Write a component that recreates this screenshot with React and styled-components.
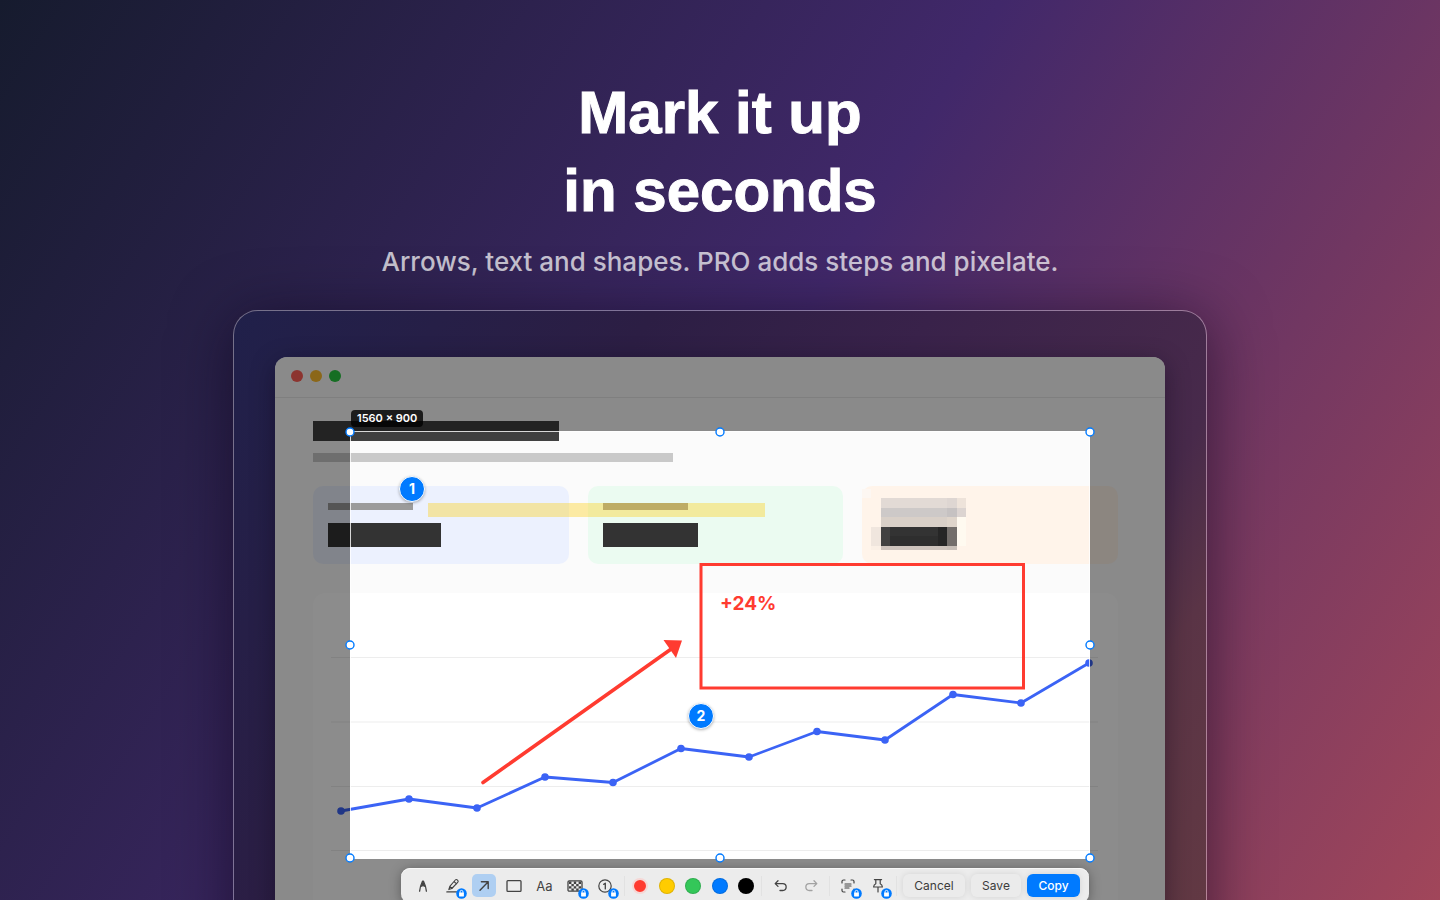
import React from 'react'
import styled, { createGlobalStyle, css } from 'styled-components'

const GlobalStyle = createGlobalStyle`
    * {
        box-sizing: border-box;
    }
    body {
        margin: 0;
        background: #41286a;
        font-family: Inter, 'Liberation Sans', sans-serif;
    }
`

const Page = styled.main`
    height: 100vh;
    overflow: hidden;
    display: flex;
    flex-direction: column;
    align-items: center;
    background: linear-gradient(122deg, #161b2e, #41286a 50%, #a1465a);
`
const Hero = styled.header`
    padding-top: 74px;
    text-align: center;
    color: #fff;
`
const Title = styled.h1`
    margin: 0;
    font-family: 'Liberation Sans', Inter, sans-serif;
    font-size: 60px;
    font-weight: 700;
    line-height: 78px;
    -webkit-text-stroke: 1px #fff;
`
const Subtitle = styled.p`
    margin: 15px 0 0;
    font-size: 26px;
    font-weight: 500;
    line-height: 34px;
    color: rgba(255, 255, 255, 0.72);
`

const Device = styled.section`
    position: relative;
    flex: none;
    width: min(974px, 100% - 48px);
    margin-top: 31px;
    padding: 46px 41px 0;
    border: 1px solid rgba(255, 255, 255, 0.36);
    border-radius: 25px;
    background: linear-gradient(122deg, #20204a, #2c1e44 30%, #39224a 50%, #482a4b 74%, #5a3446 82%, #643a42);
    background-clip: padding-box;
    box-shadow: 0 8px 60px rgba(10, 4, 20, 0.55);
`
const Window = styled.div`
    position: relative;
    height: 640px;
    border-radius: 12px;
    background: #fbfbfb;
    box-shadow: 0 6px 24px rgba(10, 0, 20, 0.4);
`
const TitleBar = styled.div`
    display: flex;
    gap: 7px;
    height: 41px;
    padding: 13px 16px;
    border-bottom: 1px solid #e8e8e8;
`
const Light = styled.span`
    width: 12px;
    height: 12px;
    border-radius: 50%;
    background: ${({ $color }) => $color};
`
const Content = styled.div`
    padding: 23px 47px 0 38px;
`
const Bar = styled.div`
    width: ${({ $width }) => $width}px;
    height: ${({ $height }) => $height}px;
    background: ${({ $tone }) => $tone};
`
const Heading = styled.div`
    display: flex;
    flex-direction: column;
    gap: 12px;
`
const Cards = styled.div`
    display: grid;
    grid-template-columns: repeat(3, 1fr);
    gap: 19px;
    margin-top: 24px;
`
const Card = styled.div`
    display: flex;
    flex-direction: column;
    gap: 13px;
    height: 78px;
    padding: ${({ $flush }) => ($flush ? 0 : '17px 15px')};
    border-radius: 10px;
    background: ${({ $tint }) => $tint};
`
const ChartPanel = styled.div`
    height: 340px;
    margin-top: 29px;
    border-radius: 12px;
    background: #fff;

    svg {
        display: block;
        width: 100%;
    }
`

const Dim = styled.div`
    position: absolute;
    inset: 0;
    overflow: hidden;
    border-radius: 12px;
`
const Hole = styled.div`
    position: absolute;
    inset: 74px 75px auto 75px;
    height: 428px;
    outline: 1px solid rgba(255, 255, 255, 0.8);
    outline-offset: -1px;
    box-shadow: 0 0 0 2000px rgba(0, 0, 0, 0.45);
`
const Selection = styled.div`
    position: absolute;
    inset: 75px 75px auto 75px;
    height: 427px;
`
const SizeTag = styled.span`
    position: absolute;
    left: 1px;
    top: -22px;
    padding: 0 6px;
    border-radius: 4px;
    background: rgba(0, 0, 0, 0.8);
    color: #fff;
    font-size: 11px;
    font-weight: 600;
    line-height: 17px;
    white-space: nowrap;
`
const Annotations = styled.svg`
    position: absolute;
    left: 0;
    top: 0;
    overflow: visible;
`
const Note = styled.span`
    position: absolute;
    left: 370px;
    top: 160px;
    color: #ff3b30;
    font-size: 19px;
    font-weight: 700;
    line-height: 24px;
`
const Step = styled.span`
    position: absolute;
    left: ${({ $x }) => $x}px;
    top: ${({ $y }) => $y}px;
    width: 26px;
    height: 26px;
    border: 1px solid #fff;
    border-radius: 50%;
    background: #007aff;
    box-shadow: 0 1px 3px rgba(0, 0, 0, 0.3);
    color: #fff;
    font-size: 14px;
    font-weight: 700;
    line-height: 24px;
    text-align: center;
`

const Toolbar = styled.div`
    position: absolute;
    right: 1px;
    top: 436px;
    display: flex;
    align-items: center;
    height: 35px;
    padding: 0 9px 0 10px;
    border-radius: 9px;
    background: #ececec;
    box-shadow: 0 2px 12px rgba(0, 0, 0, 0.35), inset 0 1px 0 #f8f8f8;
`
const Group = styled.div`
    display: flex;
    justify-content: space-between;
    width: ${({ $width }) => $width}px;
`
const Separator = styled.span`
    width: 1px;
    height: 20px;
    margin: ${({ $margin }) => $margin};
    background: #e2e2e2;
`
const buttonReset = css`
    border: 0;
    padding: 0;
    font-family: inherit;
`
const Tool = styled.button`
    ${buttonReset}
    position: relative;
    display: grid;
    place-items: center;
    width: 24px;
    height: 23px;
    border-radius: 5px;
    background: ${({ $active }) => ($active ? '#afcff2' : 'transparent')};
    color: ${({ $faded }) => ($faded ? '#a2a2a2' : '#434343')};
    font-size: 13px;
    font-weight: 400;
`
const Lock = styled.svg`
    position: absolute;
    right: -2px;
    bottom: -2px;
`
const Swatch = styled.button`
    ${buttonReset}
    width: 16px;
    height: 16px;
    border: ${({ $active }) => ($active ? '2px solid #f6d7d5' : '1px solid rgba(0, 0, 0, 0.12)')};
    border-radius: 50%;
    background: ${({ $color }) => $color};
`
const Action = styled.button`
    ${buttonReset}
    height: 23px;
    width: ${({ $width }) => $width}px;
    margin-left: 6px;
    border-radius: 6px;
    background: ${({ $primary }) => ($primary ? '#007aff' : '#ebebeb')};
    box-shadow: 0 0 6px rgba(0, 0, 0, 0.1);
    color: ${({ $primary }) => ($primary ? '#fff' : '#3c3c3c')};
    font-size: 12px;
    font-weight: ${({ $primary }) => ($primary ? 500 : 400)};
`

const points = [
    [28, 218], [96, 206], [164, 215], [232, 184], [300, 189.5], [368, 155.5],
    [436, 164], [504, 138.5], [572, 147], [640, 101.5], [708, 110], [776, 70]
]

const Chart = () => (
    <svg viewBox="0 0 805 300" role="img" aria-label="Line chart">
        {
            [64.5, 129, 193.5, 257.5].map(y =>
                <line key={y} x1="18" x2="785" y1={y} y2={y} stroke="#ededed" />
            )
        }
        <polyline points={points.join(' ')} fill="none" stroke="#3b63f5" strokeWidth="2.8" strokeLinejoin="round" />
        {
            points.map(([x, y]) => <circle key={x} cx={x} cy={y} r="3.8" fill="#3b63f5" />)
        }
    </svg>
)

// x, y, columns, rows, colour - measured in mosaic cells
const mosaic = [
    [0, 0, 1, 1, '#fdf7f2'],
    [2, 1, 7, 1, '#e2dad5'], [9, 1, 1, 1, '#ded6d2'], [10, 1, 1, 1, '#eee3da'],
    [2, 2, 7, 1, '#cdc9c8'], [9, 2, 1, 1, '#c6c2c2'], [10, 2, 1, 1, '#dcd4d1'],
    [2, 3, 7, 1, '#d9d0c8'], [9, 3, 1, 1, '#dfd5cb'], [10, 3, 1, 3, '#fffaf0'],
    [1, 4, 1, 2, '#f0e6de'], [2, 4, 1, 2, '#414141'], [3, 4, 5, 1, '#333'], [3, 5, 5, 1, '#2e2e2e'],
    [8, 4, 1, 2, '#262626'], [9, 4, 1, 2, '#736e6b'],
    [1, 6, 1, 0.5, '#fbf0e6'], [2, 6, 7, 0.5, '#cdc3bc'], [9, 6, 1, 0.5, '#c8bfb8']
]

const Mosaic = () => (
    <svg width="115" height="78" shapeRendering="crispEdges" aria-hidden="true">
        <g transform="translate(0 3) scale(9.45)">
            {
                mosaic.map(([x, y, w, h, fill]) =>
                    <rect key={`${x}-${y}`} x={x} y={y} width={w} height={h} fill={fill} />
                )
            }
        </g>
    </svg>
)

const Icon = ({ children }) => (
    <svg
        width="18" height="18" viewBox="0 0 18 18" fill="none" stroke="currentColor"
        strokeWidth="1.3" strokeLinecap="round" strokeLinejoin="round" aria-hidden="true"
    >
        {children}
    </svg>
)

const LockBadge = () => (
    <Lock width="11" height="11" viewBox="0 0 11 11" aria-hidden="true">
        <circle cx="5.5" cy="5.5" r="5.3" fill="#007aff" />
        <rect x="3.1" y="4.6" width="4.8" height="3.9" rx=".6" fill="#fff" />
        <path d="M4 5V3.9a1.5 1.5 0 0 1 3 0V5" fill="none" stroke="#fff" strokeWidth=".9" />
    </Lock>
)

const tools = [
    {
        name: 'Pen',
        icon: (
            <Icon>
                <path d="M5.6 14.2c.3-3.4 1.3-6.6 2.9-10h1c1.6 3.4 2.600 6.600 2.900 10M7.300 9.200c1-.6 2.400-.6 3.400 0" />
                <path d="M8.500 4h1l1.200 4.500H7.300z" fill="currentColor" stroke="none" />
            </Icon>
        )
    },
    {
        name: 'Highlighter',
        locked: true,
        icon: (
            <Icon>
                <path
                    d="M2.800 14.900h9.700M4.800 12.600l1-3.300 5.500-6.300c.6-.7 1.500-.6 2 0l.4.4c.6.5.6 1.300 0 1.900l-5.900 6.200zM5.800 9.300l2.300 2.200M10 4.500l2.500 2.300"
                    strokeWidth="1.100"
                />
            </Icon>
        )
    },
    { name: 'Arrow', active: true, icon: <Icon><path d="M5 13.200 13 5M6.400 4.800H13.200V11.600" strokeWidth="1.400" /></Icon> },
    { name: 'Rectangle', icon: <Icon><rect x="2" y="3.600" width="14" height="10.800" rx=".9" /></Icon> },
    { name: 'Text', icon: 'Aa' },
    {
        name: 'Pixelate',
        locked: true,
        icon: (
            <Icon>
                <rect x="2" y="3.800" width="14" height="10.400" rx="1.200" />
                <path
                    d="M3 4.500h2.400v2.400H3zM7.800 4.500h2.400v2.400H7.800zM12.600 4.500H15v2.400h-2.400zM5.400 6.900h2.400v2.300H5.400zM10.200 6.900h2.400v2.300h-2.400zM3 9.200h2.400v2.300H3zM7.800 9.200h2.400v2.300H7.800zM12.600 9.200H15v2.300h-2.400zM5.400 11.500h2.400v2.200H5.400zM10.200 11.500h2.400v2.200h-2.400z"
                    fill="currentColor"
                    stroke="none"
                />
            </Icon>
        )
    },
    {
        name: 'Step number',
        locked: true,
        icon: <Icon><circle cx="9" cy="9" r="6.200" strokeWidth="1.200" /><path d="M7.700 7.300 9.300 6.200v5.700" /></Icon>
    }
]

const swatches = [
    { name: 'Red', color: '#ff3b30' },
    { name: 'Yellow', color: '#ffcc00' },
    { name: 'Green', color: '#34c759' },
    { name: 'Blue', color: '#007aff' },
    { name: 'Black', color: '#000' }
]

const handles = [
    ['0%', '0%'], ['50%', '0%'], ['100%', '0%'], ['0%', '50%'],
    ['100%', '50%'], ['0%', '100%'], ['50%', '100%'], ['100%', '100%']
]

const EditorToolbar = () => (
    <Toolbar role="toolbar" aria-label="Markup">
        <Group $width={206}>
            {
                tools.map(({ name, icon, locked, active }) =>
                    <Tool key={name} type="button" aria-label={name} $active={active}>
                        {icon}
                        {locked && <LockBadge />}
                    </Tool>
                )
            }
        </Group>
        <Separator $margin="0 7px" />
        <Group $width={122}>
            {
                swatches.map(({ name, color }, i) =>
                    <Swatch key={name} type="button" aria-label={name} $color={color} $active={i === 0} />
                )
            }
        </Group>
        <Separator $margin="0 7px" />
        <Group $width={54}>
            <Tool type="button" aria-label="Undo">
                <Icon><path d="M6 3.800 3.200 6.600 6 9.400M3.400 6.600h7.300a3.400 3.400 0 0 1 0 6.900H8" /></Icon>
            </Tool>
            <Tool type="button" aria-label="Redo" $faded>
                <Icon><path d="m12 3.800 2.800 2.800L12 9.400M14.600 6.600H7.300a3.400 3.400 0 0 0 0 6.900H10" /></Icon>
            </Tool>
        </Group>
        <Separator $margin="0 6px" />
        <Group $width={54}>
            <Tool type="button" aria-label="Recognize text">
                <Icon>
                    <path
                        d="M3 6V4.500A1.500 1.500 0 0 1 4.500 3H6M12 3h1.500A1.500 1.500 0 0 1 15 4.500V6M15 12v1.500M3 12v1.500A1.500 1.500 0 0 0 4.500 15H6M6 7h6M6 9h6M6 11h4"
                        strokeWidth="1.200"
                    />
                </Icon>
                <LockBadge />
            </Tool>
            <Tool type="button" aria-label="Pin">
                <Icon>
                    <path
                        d="M5.400 2.600h7.200M6.800 2.800v4C5.400 7.500 4.700 8.600 4.600 10h8.800c-.1-1.400-.8-2.500-2.200-3.200v-4M9 10v5"
                        strokeWidth="1.200"
                    />
                </Icon>
                <LockBadge />
            </Tool>
        </Group>
        <Separator $margin="0 0 0 6px" />
        <Action type="button" $width={62}>Cancel</Action>
        <Action type="button" $width={50}>Save</Action>
        <Action type="button" $width={53} $primary>Copy</Action>
    </Toolbar>
)

const App = () => (
    <Page>
        <GlobalStyle />
        <Hero>
            <Title>Mark it up<br />in seconds</Title>
            <Subtitle>Arrows, text and shapes. PRO adds steps and pixelate.</Subtitle>
        </Hero>

        <Device>
            <Window>
                <TitleBar>
                    <Light $color="#ff5f57" />
                    <Light $color="#febc2e" />
                    <Light $color="#28c840" />
                </TitleBar>

                <Content>
                    <Heading>
                        <Bar $width={246} $height={20} $tone="#404040" />
                        <Bar $width={360} $height={9} $tone="#c9c9c9" />
                    </Heading>
                    <Cards>
                        <Card $tint="#ecf1fe">
                            <Bar $width={85} $height={7} $tone="#9b9b9b" />
                            <Bar $width={113} $height={24} $tone="#333" />
                        </Card>
                        <Card $tint="#ebfbf1">
                            <Bar $width={85} $height={7} $tone="#9b9b9b" />
                            <Bar $width={95} $height={24} $tone="#333" />
                        </Card>
                        <Card $tint="#fff4ea" $flush>
                            <Mosaic />
                        </Card>
                    </Cards>
                    <ChartPanel>
                        <Chart />
                    </ChartPanel>
                </Content>

                <Dim>
                    <Hole />
                </Dim>

                <Selection>
                    <Annotations width="100%" height="426" aria-hidden="true">
                        <rect x="78" y="71" width="337" height="14" fill="#ffcc00" fillOpacity=".35" />
                        <rect x="351" y="132.500" width="322.500" height="123.500" fill="none" stroke="#ff3b30" strokeWidth="3" />
                        <path d="M133 350.500 324 215" stroke="#ff3b30" strokeWidth="3.600" strokeLinecap="round" />
                        <path d="M332 208.500 313.500 208 326 226z" fill="#ff3b30" />
                        {
                            handles.map(([x, y]) =>
                                <circle key={x + y} cx={x} cy={y} r="4" fill="#fff" stroke="#007aff" strokeWidth="1.400" />
                            )
                        }
                    </Annotations>
                    <Note>+24%</Note>
                    <Step $x={49} $y={44}>1</Step>
                    <Step $x={338} $y={271}>2</Step>
                    <SizeTag>1560 × 900</SizeTag>
                    <EditorToolbar />
                </Selection>
            </Window>
        </Device>
    </Page>
)

export default App
